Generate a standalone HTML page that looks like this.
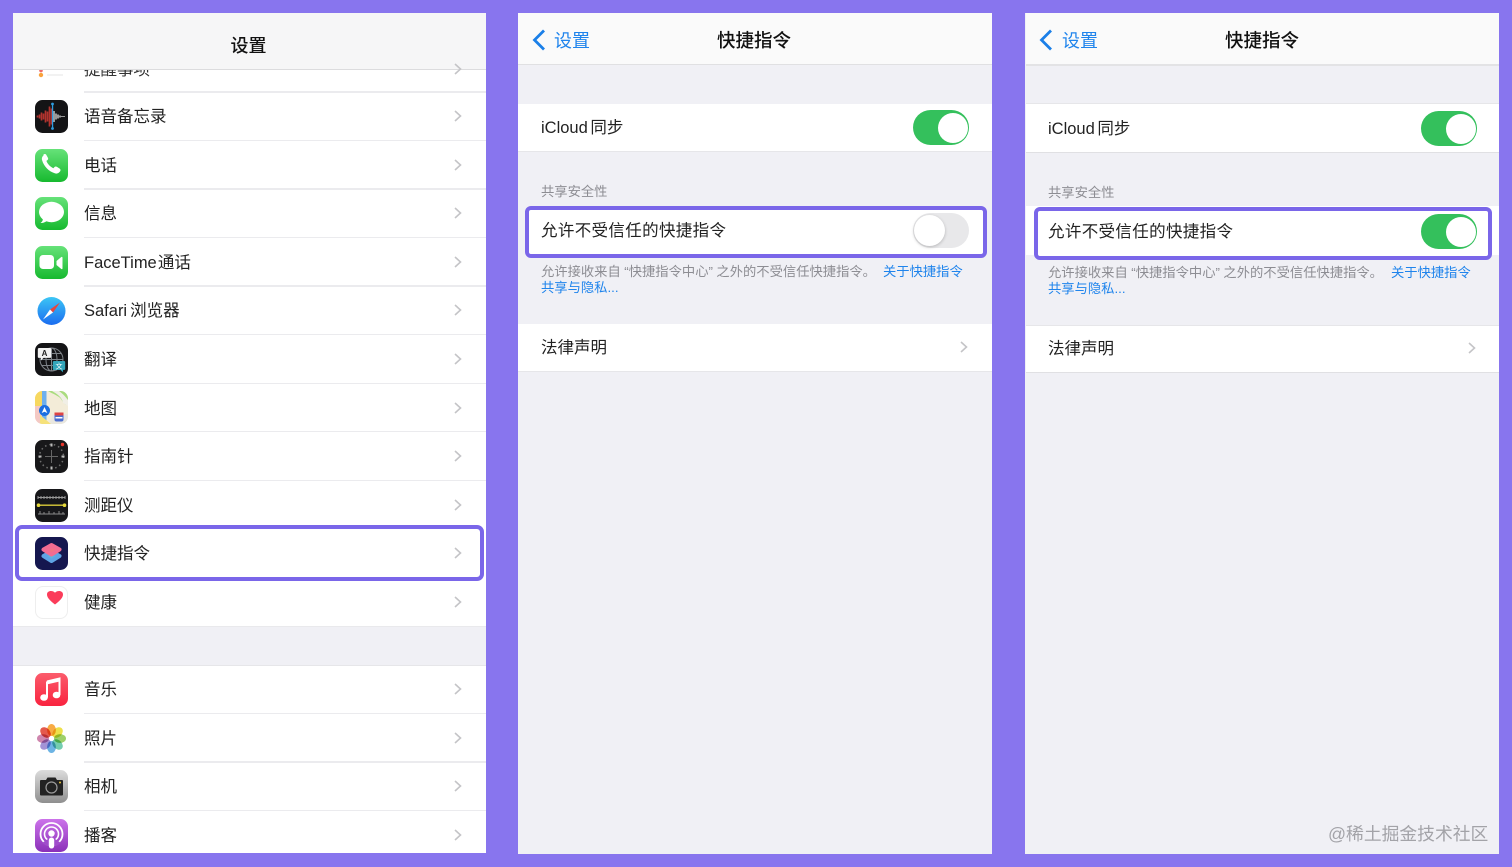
<!DOCTYPE html>
<html lang="zh"><head><meta charset="utf-8"><title>快捷指令</title>
<style>
*{box-sizing:border-box;margin:0;padding:0}
html,body{width:1512px;height:867px;overflow:hidden;background:#8875ee}
body{position:relative;font-family:"Liberation Sans","Noto Sans CJK SC",sans-serif;color:#1c1c1e}
div,svg{position:absolute}
.p{background:#f0f0f5;overflow:hidden}
.w{background:#fff}
.t{font-size:16.5px;line-height:22px;height:22px;margin-top:1px;white-space:nowrap;color:#222;filter:blur(.3px)}
.h{font-weight:500;color:#111}
.sep{height:1px;background:#ebebee}
.s{font-size:13.3px;line-height:18px;height:18px;margin-top:1px;white-space:nowrap;color:#8d8d93;filter:blur(.3px)}
.s span{margin:0 0 0 3.500px}
.b{color:#1f84ec}
.chev{width:8px;height:14px}
.ic{width:33px;height:33px;left:35px;filter:blur(.3px)}
.hl{border:4px solid #7a66e9;border-radius:6px;background:#fff}
.tg{width:56px;height:35px;border-radius:18px;background:#34c05c}
.tg i{position:absolute;display:block;width:30px;height:30px;border-radius:50%;background:#fff;left:24.5px;top:2.5px}
.off{background:#e8e8ea}
.off i{left:1px;width:31px;height:31px;top:2px;box-shadow:0 1px 3px rgba(0,0,0,.22)}
</style></head><body>

<!-- LEFT PANEL -->
<div class="p w" style="left:13px;top:13px;width:473px;height:840px"></div>
<div class="t" style="left:84px;top:58px;color:#333">提醒事项</div>
<svg class="ic" style="top:58px" viewBox="0 0 33 33"><circle cx="6" cy="17" r="2.200" fill="#f9a23c"/><circle cx="6" cy="12.500" r="1.800" fill="#ef6a6a"/><rect x="12" y="16.500" width="16" height="1" fill="#e6e6e6"/></svg>
<div style="left:13px;top:13px;width:473px;height:57px;background:#f6f6f7;border-bottom:1px solid #dcdcde"></div>
<div class="t h" style="left:230.500px;top:34px;font-size:18px">设置</div>

<div class="sep" style="left:84px;top:91px;width:402px;height:2px"></div>
<div class="sep" style="left:84px;top:140px;width:402px"></div>
<div class="sep" style="left:84px;top:188px;width:402px;height:2px"></div>
<div class="sep" style="left:84px;top:237px;width:402px"></div>
<div class="sep" style="left:84px;top:285px;width:402px;height:2px"></div>
<div class="sep" style="left:84px;top:334px;width:402px"></div>
<div class="sep" style="left:84px;top:383px;width:402px"></div>
<div class="sep" style="left:84px;top:431px;width:402px"></div>
<div class="sep" style="left:84px;top:480px;width:402px"></div>

<div class="p" style="left:13px;top:626px;width:473px;height:40px;border-top:1px solid #e9e9ec;border-bottom:1px solid #e6e6e9"></div>
<div class="sep" style="left:84px;top:713px;width:402px"></div>
<div class="sep" style="left:84px;top:761px;width:402px;height:2px"></div>
<div class="sep" style="left:84px;top:810px;width:402px"></div>

<div class="hl" style="left:15px;top:525px;width:469px;height:56px;border-radius:7px"></div>

<div class="t" style="left:84px;top:105px">语音备忘录</div>
<div class="t" style="left:84px;top:154px">电话</div>
<div class="t" style="left:84px;top:202px">信息</div>
<div class="t" style="left:84px;top:251px;word-spacing:-3.500px">FaceTime 通话</div>
<div class="t" style="left:84px;top:299px;word-spacing:-1.500px">Safari 浏览器</div>
<div class="t" style="left:84px;top:348px">翻译</div>
<div class="t" style="left:84px;top:397px">地图</div>
<div class="t" style="left:84px;top:445px">指南针</div>
<div class="t" style="left:84px;top:494px">测距仪</div>
<div class="t" style="left:84px;top:542px">快捷指令</div>
<div class="t" style="left:84px;top:591px">健康</div>
<div class="t" style="left:84px;top:678px">音乐</div>
<div class="t" style="left:84px;top:727px">照片</div>
<div class="t" style="left:84px;top:775px">相机</div>
<div class="t" style="left:84px;top:824px">播客</div>

<!-- chevrons left -->
<svg class="chev" style="left:454px;top:62px" viewBox="0 0 8 14"><path d="M1 2l5.500 5L1 12" fill="none" stroke="#c4c4c7" stroke-width="1.600"/></svg>
<svg class="chev" style="left:454px;top:109px" viewBox="0 0 8 14"><path d="M1 2l5.500 5L1 12" fill="none" stroke="#c4c4c7" stroke-width="1.600"/></svg>
<svg class="chev" style="left:454px;top:158px" viewBox="0 0 8 14"><path d="M1 2l5.500 5L1 12" fill="none" stroke="#c4c4c7" stroke-width="1.600"/></svg>
<svg class="chev" style="left:454px;top:206px" viewBox="0 0 8 14"><path d="M1 2l5.500 5L1 12" fill="none" stroke="#c4c4c7" stroke-width="1.600"/></svg>
<svg class="chev" style="left:454px;top:255px" viewBox="0 0 8 14"><path d="M1 2l5.500 5L1 12" fill="none" stroke="#c4c4c7" stroke-width="1.600"/></svg>
<svg class="chev" style="left:454px;top:303px" viewBox="0 0 8 14"><path d="M1 2l5.500 5L1 12" fill="none" stroke="#c4c4c7" stroke-width="1.600"/></svg>
<svg class="chev" style="left:454px;top:352px" viewBox="0 0 8 14"><path d="M1 2l5.500 5L1 12" fill="none" stroke="#c4c4c7" stroke-width="1.600"/></svg>
<svg class="chev" style="left:454px;top:401px" viewBox="0 0 8 14"><path d="M1 2l5.500 5L1 12" fill="none" stroke="#c4c4c7" stroke-width="1.600"/></svg>
<svg class="chev" style="left:454px;top:449px" viewBox="0 0 8 14"><path d="M1 2l5.500 5L1 12" fill="none" stroke="#c4c4c7" stroke-width="1.600"/></svg>
<svg class="chev" style="left:454px;top:498px" viewBox="0 0 8 14"><path d="M1 2l5.500 5L1 12" fill="none" stroke="#c4c4c7" stroke-width="1.600"/></svg>
<svg class="chev" style="left:454px;top:546px" viewBox="0 0 8 14"><path d="M1 2l5.500 5L1 12" fill="none" stroke="#c4c4c7" stroke-width="1.600"/></svg>
<svg class="chev" style="left:454px;top:595px" viewBox="0 0 8 14"><path d="M1 2l5.500 5L1 12" fill="none" stroke="#c4c4c7" stroke-width="1.600"/></svg>
<svg class="chev" style="left:454px;top:682px" viewBox="0 0 8 14"><path d="M1 2l5.500 5L1 12" fill="none" stroke="#c4c4c7" stroke-width="1.600"/></svg>
<svg class="chev" style="left:454px;top:731px" viewBox="0 0 8 14"><path d="M1 2l5.500 5L1 12" fill="none" stroke="#c4c4c7" stroke-width="1.600"/></svg>
<svg class="chev" style="left:454px;top:779px" viewBox="0 0 8 14"><path d="M1 2l5.500 5L1 12" fill="none" stroke="#c4c4c7" stroke-width="1.600"/></svg>
<svg class="chev" style="left:454px;top:828px" viewBox="0 0 8 14"><path d="M1 2l5.500 5L1 12" fill="none" stroke="#c4c4c7" stroke-width="1.600"/></svg>

<!-- icons -->
<svg class="ic" style="top:100px" viewBox="0 0 33 33"><rect width="33" height="33" rx="7.500" fill="#141416"/><path d="M2.500 15.500v2M4.500 14.500v4M6.500 12.500v8M8.500 13.500v6M10.500 10.500v12M12.500 11.500v10M14.500 6.500v20M16.500 8.500v16" stroke="#b2332e" stroke-width="1.700"/><path d="M19 11v11M21 13.500v6M23 14.500v4M25 15.500v2M27 16v1M29 16v1" stroke="#c4c4c4" stroke-width="1.500"/><rect x="16.900" y="3" width="1.300" height="26" fill="#2f9de0"/><circle cx="17.500" cy="4" r="1.400" fill="#2f9de0"/><circle cx="17.500" cy="28.500" r="1.400" fill="#2f9de0"/></svg>

<svg class="ic" style="top:149px" viewBox="0 0 33 33"><defs><linearGradient id="g" x1="0" y1="0" x2="0" y2="1"><stop offset="0" stop-color="#66e279"/><stop offset="1" stop-color="#17b92f"/></linearGradient></defs><rect width="33" height="33" rx="7.500" fill="url(#g)"/><path d="M8.500 5.500c1-.7 2.200-.6 2.800.4l1.600 2.800c.5.900.3 1.800-.5 2.400l-1 .8c1.300 3.300 3.800 5.800 7 7.300l1-1.100c.6-.7 1.600-.8 2.400-.3l2.900 1.800c.9.600 1.100 1.800.4 2.800-1.300 1.800-3 2.600-5 2-6-1.700-11.300-7-13-13.100-.6-2.100.1-3.700 1.400-4.800z" fill="#fff"/></svg>

<svg class="ic" style="top:197px" viewBox="0 0 33 33"><rect width="33" height="33" rx="7.500" fill="url(#g)"/><ellipse cx="16.500" cy="15" rx="12.500" ry="10.200" fill="#fff"/><path d="M8 21.500c0 2-1 3.500-2.500 4.500 3 0 5.500-1 7-3z" fill="#fff"/></svg>

<svg class="ic" style="top:246px" viewBox="0 0 33 33"><rect width="33" height="33" rx="7.500" fill="url(#g)"/><rect x="4.500" y="9" width="14.500" height="14" rx="3.500" fill="#fff"/><path d="M21.500 15l4.800-4c.6-.4 1.200 0 1.200.6v10.800c0 .7-.6 1-1.200.6l-4.800-4z" fill="#fff"/></svg>

<svg class="ic" style="top:294px" viewBox="0 0 33 33"><defs><linearGradient id="sf" x1="0" y1="0" x2="0" y2="1"><stop offset="0" stop-color="#3cc6f5"/><stop offset="1" stop-color="#1a6cf0"/></linearGradient></defs><circle cx="16.500" cy="17" r="14" fill="url(#sf)"/><path d="M25 8.500L15 15.500l3 3z" fill="#e8453c"/><path d="M8 25.500L18 18.500l-3-3z" fill="#fff"/></svg>

<svg class="ic" style="top:343px" viewBox="0 0 33 33"><rect width="33" height="33" rx="7.500" fill="#141416"/><circle cx="16.500" cy="16.500" r="11.500" fill="none" stroke="#7d8287" stroke-width="1"/><ellipse cx="16.500" cy="16.500" rx="5.500" ry="11.500" fill="none" stroke="#7d8287" stroke-width="1"/><path d="M5 16.500h23M7 10.500h19M7 22.500h19M16.500 5v23" stroke="#7d8287" stroke-width="1"/><path d="M4 5h11c.8 0 1.200.5 1.200 1.200v7.500c0 .7-.5 1.200-1.200 1.200H8.500L6 17.500v-2.600H4c-.7 0-1.200-.5-1.200-1.200V6.200C2.800 5.500 3.300 5 4 5z" fill="#f2f2f2"/><text x="9.500" y="13" font-size="8" font-weight="700" text-anchor="middle" fill="#222" font-family="Liberation Sans">A</text><path d="M19 18h10c.8 0 1.200.5 1.200 1.200v6.500c0 .7-.5 1.200-1.200 1.200h-1v2.300L25.500 27H19c-.7 0-1.200-.5-1.200-1.200v-6.600c0-.7.500-1.200 1.200-1.200z" fill="#32a5ba"/><text x="24" y="25.500" font-size="7" text-anchor="middle" fill="#fff" font-family="Noto Sans CJK SC">文</text></svg>

<svg class="ic" style="top:391px" viewBox="0 0 33 33"><defs><clipPath id="mc"><rect width="33" height="33" rx="7.500"/></clipPath></defs><g clip-path="url(#mc)"><rect width="33" height="33" fill="#f3ecd8"/><path d="M13 0h20v14c-4 0-5-3-7-6S18 3 13 0z" fill="#a9dc7e"/><path d="M17 0c5 3 10 6 11 12l5 3V9c-3-4-6-7-9-9z" fill="#f1efe6"/><path d="M0 6h8l5 14L9 33H0z" fill="#f4c9c4"/><path d="M0 0h7v15H0z" fill="#f7d860"/><path d="M14 33l4-10h15v10z" fill="#e9e7df"/><path d="M7 0h4.500v33H7z" fill="#6db0ee"/><path d="M5 24l11 9H5z" fill="#f6e27a"/></g><circle cx="9.500" cy="19.500" r="5.500" fill="#1b6fe0"/><path d="M9.500 16l2.800 6-2.800-1.300L6.700 22z" fill="#fff"/><rect x="19.500" y="21.500" width="9" height="9" rx="2" fill="#4c6ed0"/><rect x="19.500" y="21.500" width="9" height="3" fill="#d44"/><rect x="20.500" y="26" width="7" height="1.500" fill="#fff"/></svg>

<svg class="ic" style="top:440px" viewBox="0 0 33 33"><rect width="33" height="33" rx="7.500" fill="#18181a"/><circle cx="16.500" cy="16.500" r="12" fill="none" stroke="#6e6e6e" stroke-width="1.500" stroke-dasharray="1.500 3"/><path d="M16.500 10v13M10 16.500h13" stroke="#666" stroke-width="1"/><rect x="15.500" y="3.500" width="2" height="3" fill="#bbb"/><rect x="15.500" y="26.500" width="2" height="3" fill="#bbb"/><rect x="3.500" y="15.500" width="3" height="2" fill="#bbb"/><rect x="26.500" y="15.500" width="3" height="2" fill="#bbb"/><circle cx="27.500" cy="4.500" r="1.700" fill="#e6352b"/></svg>

<svg class="ic" style="top:489px" viewBox="0 0 33 33"><rect width="33" height="33" rx="7.500" fill="#17171a"/><path d="M3 8.500h27" stroke="#999" stroke-width="1"/><path d="M3 7v3M6 7v3M9 7v3M12 7v3M15 7v3M18 7v3M21 7v3M24 7v3M27 7v3M30 7v3" stroke="#999" stroke-width="1"/><rect x="2" y="15.500" width="29" height="1.400" fill="#d8c93a"/><circle cx="3.500" cy="16.200" r="1.800" fill="#e6d93c"/><circle cx="29.500" cy="16.200" r="1.800" fill="#e6d93c"/><path d="M3 25h27M5 22v3M9 23v2M14 22v3M19 23v2M24 22v3M28 23v2" stroke="#8a8a8a" stroke-width="1"/></svg>

<svg class="ic" style="top:537px" viewBox="0 0 33 33"><defs><linearGradient id="sa" x1="0" y1="0" x2="1" y2="1"><stop offset="0" stop-color="#f45fb0"/><stop offset="1" stop-color="#f2855f"/></linearGradient></defs><rect width="33" height="33" rx="7.500" fill="#15174f"/><path d="M16.500 14.500L24.500 19l-8 5-8-5z" fill="#5fb4e0" stroke="#5fa4e4" stroke-width="4" stroke-linejoin="round"/><path d="M16.500 8L24.500 12.500l-8 5-8-5z" fill="url(#sa)" stroke="#f36c92" stroke-width="4" stroke-linejoin="round"/></svg>

<div style="left:35px;top:586px;width:33px;height:33px;border:1px solid #eee;border-radius:8px;background:#fff"></div>
<svg class="ic" style="top:586px" viewBox="0 0 33 33"><path d="M20 18.500C14 14 12 11 12 8.500 12 6 14 5 15.800 5 17.800 5 19.300 5.800 20 6.800 20.700 5.800 22.200 5 24.200 5 26 5 28 6 28 8.500 28 11 26 14 20 18.500z" fill="#fb3c5a"/></svg>

<svg class="ic" style="top:673px" viewBox="0 0 33 33"><defs><linearGradient id="mu" x1="0" y1="0" x2="0" y2="1"><stop offset="0" stop-color="#fb5c6c"/><stop offset="1" stop-color="#f9233f"/></linearGradient></defs><rect width="33" height="33" rx="7.500" fill="url(#mu)"/><path d="M12 8.500L24.500 5.500V22M12 8.500v16" fill="none" stroke="#fff" stroke-width="2"/><rect x="11.500" y="7" width="13.500" height="3" fill="#fff" transform="rotate(-13 18 8.500)"/><ellipse cx="9" cy="24.500" rx="3.800" ry="3.300" fill="#fff"/><ellipse cx="21.500" cy="22" rx="3.800" ry="3.300" fill="#fff"/></svg>

<svg class="ic" style="top:722px" viewBox="0 0 33 33"><g transform="translate(16.500 16.500)"><g style="isolation:isolate"><ellipse cy="-8.500" rx="4.400" ry="6" fill="#f8ab45" style="mix-blend-mode:multiply"/><ellipse cy="-8.500" rx="4.400" ry="6" fill="#eee04a" transform="rotate(45)" style="mix-blend-mode:multiply"/><ellipse cy="-8.500" rx="4.400" ry="6" fill="#9ed06a" transform="rotate(90)" style="mix-blend-mode:multiply"/><ellipse cy="-8.500" rx="4.400" ry="6" fill="#74cdb0" transform="rotate(135)" style="mix-blend-mode:multiply"/><ellipse cy="-8.500" rx="4.400" ry="6" fill="#6db4e4" transform="rotate(180)" style="mix-blend-mode:multiply"/><ellipse cy="-8.500" rx="4.400" ry="6" fill="#a393d6" transform="rotate(225)" style="mix-blend-mode:multiply"/><ellipse cy="-8.500" rx="4.400" ry="6" fill="#cf86ae" transform="rotate(270)" style="mix-blend-mode:multiply"/><ellipse cy="-8.500" rx="4.400" ry="6" fill="#e4594c" transform="rotate(315)" style="mix-blend-mode:multiply"/></g></g></svg>

<svg class="ic" style="top:770px" viewBox="0 0 33 33"><defs><linearGradient id="ca" x1="0" y1="0" x2="0" y2="1"><stop offset="0" stop-color="#dcdcdc"/><stop offset="1" stop-color="#8f8f8f"/></linearGradient></defs><rect width="33" height="33" rx="7.500" fill="url(#ca)"/><path d="M6 10h5l1.500-2.500h8L22 10h5c.8 0 1 .5 1 1v13.500c0 .6-.4 1-1 1H6c-.6 0-1-.4-1-1V11c0-.6.400-1 1-1z" fill="#222"/><circle cx="16.500" cy="17.500" r="5.500" fill="none" stroke="#9a9a9a" stroke-width="1.200"/><circle cx="25" cy="12.500" r="1" fill="#e7c53d"/></svg>

<svg class="ic" style="top:819px" viewBox="0 0 33 33"><defs><linearGradient id="po" x1="0" y1="0" x2="0" y2="1"><stop offset="0" stop-color="#cc73ea"/><stop offset="1" stop-color="#8a30b8"/></linearGradient></defs><rect width="33" height="33" rx="7.500" fill="url(#po)"/><circle cx="16.500" cy="15" r="11" fill="none" stroke="#fff" stroke-width="1.800"/><circle cx="16.500" cy="15" r="7" fill="none" stroke="#fff" stroke-width="1.600"/><path d="M7 24l6-4h7l6 4-5 3H12z" fill="#a04ccb"/><circle cx="16.500" cy="14.500" r="3.200" fill="#fff"/><rect x="13.800" y="18.500" width="5.400" height="11" rx="2.700" fill="#fff"/></svg>

<!-- MIDDLE PANEL -->
<div class="p" style="left:518px;top:13px;width:474px;height:841px"></div>
<div style="left:518px;top:13px;width:474px;height:52px;background:#fafafa;border-bottom:1px solid #e0e0e2"></div>
<svg style="left:531px;top:28px;width:16px;height:24px" viewBox="0 0 16 24"><path d="M13 2.500L3.500 12l9.500 9.500" fill="none" stroke="#1a7fe8" stroke-width="2.800"/></svg>
<div class="t b" style="left:554px;top:29px;font-size:18px">设置</div>
<div class="t h" style="left:717px;top:29px;font-size:18.500px">快捷指令</div>
<div class="w" style="left:518px;top:104px;width:474px;height:48px;border-bottom:1px solid #e6e6e9"></div>
<div class="t" style="left:541px;top:116px;word-spacing:-2px">iCloud 同步</div>
<div class="tg" style="left:913px;top:110px"><i></i></div>
<div class="s" style="left:541px;top:182px">共享安全性</div>
<div class="hl" style="left:525px;top:206px;width:462px;height:52px"></div>
<div class="t" style="left:541px;top:219px;letter-spacing:.35px">允许不受信任的快捷指令</div>
<div class="tg off" style="left:913px;top:213px"><i></i></div>
<div class="s" style="left:541px;top:262px">允许接收来自<span></span>“快捷指令中心”<span></span>之外的不受信任快捷指令。</div>
<div class="s b" style="left:883px;top:262px">关于快捷指令</div>
<div class="s b" style="left:541px;top:278px">共享与隐私...</div>
<div class="w" style="left:518px;top:324px;width:474px;height:48px;border-bottom:1px solid #e6e6e9"></div>
<div class="t" style="left:541px;top:336px">法律声明</div>
<svg class="chev" style="left:960px;top:340px" viewBox="0 0 8 14"><path d="M1 2l5.500 5L1 12" fill="none" stroke="#c4c4c7" stroke-width="1.600"/></svg>

<!-- RIGHT PANEL -->
<div class="p" style="left:1025px;top:13px;width:474px;height:841px"></div>
<div style="left:1026px;top:13px;width:473px;height:53px;background:#fafafa;border-bottom:2px solid #e3e3e5"></div>
<svg style="left:1038px;top:28px;width:16px;height:24px" viewBox="0 0 16 24"><path d="M13 2.500L3.500 12l9.500 9.500" fill="none" stroke="#1a7fe8" stroke-width="2.800"/></svg>
<div class="t b" style="left:1062px;top:29px;font-size:18px">设置</div>
<div class="t h" style="left:1225px;top:29px;font-size:18.500px">快捷指令</div>
<div class="w" style="left:1026px;top:103px;width:473px;height:50px;border-top:1px solid #e6e6e9;border-bottom:1px solid #e0e0e3"></div>
<div class="t" style="left:1048px;top:117px;word-spacing:-2px">iCloud 同步</div>
<div class="tg" style="left:1421px;top:111px"><i></i></div>
<div class="s" style="left:1048px;top:183px">共享安全性</div>
<div class="w" style="left:1026px;top:206px;width:473px;height:49px"></div>
<div class="hl" style="left:1034px;top:207px;width:458px;height:53px"></div>
<div class="t" style="left:1048px;top:220px;letter-spacing:.35px">允许不受信任的快捷指令</div>
<div class="tg" style="left:1421px;top:214px"><i></i></div>
<div class="s" style="left:1048px;top:263px">允许接收来自<span></span>“快捷指令中心”<span></span>之外的不受信任快捷指令。</div>
<div class="s b" style="left:1391px;top:263px">关于快捷指令</div>
<div class="s b" style="left:1048px;top:279px">共享与隐私...</div>
<div class="w" style="left:1026px;top:325px;width:473px;height:48px;border-top:1px solid #e6e6e9;border-bottom:1px solid #e0e0e3"></div>
<div class="t" style="left:1048px;top:337px">法律声明</div>
<svg class="chev" style="left:1468px;top:341px" viewBox="0 0 8 14"><path d="M1 2l5.500 5L1 12" fill="none" stroke="#c4c4c7" stroke-width="1.600"/></svg>
<div class="t" style="left:1328px;top:822px;font-size:17.800px;color:#a3a3a8">@稀土掘金技术社区</div>
</body></html>
